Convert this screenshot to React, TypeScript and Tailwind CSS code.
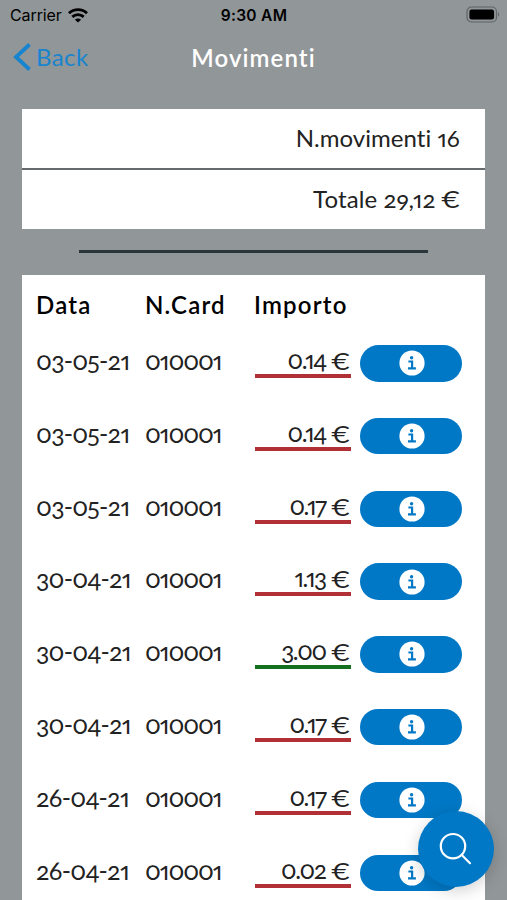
interface Movimento {
    data: string
    card: string
    importo: string
    entrata?: boolean
}

const movimenti: Movimento[] = [
    { data: '03-05-21', card: '010001', importo: '0.14' },
    { data: '03-05-21', card: '010001', importo: '0.14' },
    { data: '03-05-21', card: '010001', importo: '0.17' },
    { data: '30-04-21', card: '010001', importo: '1.13' },
    { data: '30-04-21', card: '010001', importo: '3.00', entrata: true },
    { data: '30-04-21', card: '010001', importo: '0.17' },
    { data: '26-04-21', card: '010001', importo: '0.17' },
    { data: '26-04-21', card: '010001', importo: '0.02' },
]

function StatusBar() {
    return (
        <div className="grid h-[30px] grid-cols-3 items-center pr-[7px] pl-[10px] font-['Inter',sans-serif] text-black">
            <div className="flex items-center gap-[6px]">
                <span className="text-[16px] tracking-[-0.1px]">Carrier</span>
                <svg width="20" height="15" viewBox="0 0 20 15" fill="none" stroke="currentColor" strokeWidth="2.9">
                    <path d="M1 5.3C6 .4 14 .4 19 5.3" />
                    <path d="M4.3 8.9c3.3-3.1 8.1-3.1 11.4 0" />
                    <path d="M10 14.6 6.9 11.7c1.7-1.6 4.5-1.6 6.2 0z" fill="currentColor" stroke="none" />
                </svg>
            </div>
            <span className="pt-px pr-[2px] text-center text-[15.5px] font-semibold tracking-[0.3px] whitespace-nowrap">9:30 AM</span>
            <svg className="-mt-px justify-self-end" width="34" height="17" viewBox="0 0 34 17" fill="none">
                <rect x="1" y="1" width="29.5" height="15" rx="4.5" stroke="#5f6466" strokeWidth="1.2" />
                <rect x="3.4" y="3.4" width="24.7" height="10.2" rx="2.3" fill="#000" />
                <path d="M32 6.3c1.6.6 1.6 3.8 0 4.4z" fill="#5f6466" />
            </svg>
        </div>
    )
}

function Header() {
    return (
        <header className="grid h-[55px] grid-cols-3 items-center px-[13px]">
            <button className="flex items-center gap-[5px] text-[#1784cf]">
                <svg className="-mt-px" width="18" height="28" viewBox="0 0 18 28" fill="none" stroke="currentColor" strokeWidth="3.8">
                    <path d="M16.5 1.5 3 14 16.5 26.5" />
                </svg>
                <span className="-mt-[2px] text-[24px] tracking-[0.4px]">Back</span>
            </button>
            <h1 className="text-center text-[24px] font-semibold tracking-[1.1px] text-white">Movimenti</h1>
        </header>
    )
}

function Riepilogo() {
    return (
        <section className="mx-[22px] mt-[24px] h-[120px] bg-white text-right text-[24px] text-[#222]">
            <p className="flex h-[61px] items-center justify-end border-b-2 border-[#666a6c] pr-[25px] pb-px tracking-[0.05px]">N.movimenti 16</p>
            <p className="flex h-[59px] items-center justify-end gap-[7px] pr-[25px] pb-[2px]">
                <span className="tracking-[0.1px]">Totale 29,12</span>
                <Euro />
            </p>
        </section>
    )
}

// Il simbolo dell'euro resta ad altezza piena accanto alle cifre minuscole
function Euro() {
    return <span className="inline-block origin-right translate-y-px scale-x-115 text-[23.5px] tracking-normal lining-nums">€</span>
}

function InfoIcon() {
    return (
        <svg className="ml-px" width="26" height="26" viewBox="-13 -13 26 26" fill="none">
            <circle r="12.6" fill="#fff" />
            <circle cx="-0.4" cy="-5.2" r="1.7" fill="#0078c5" />
            <path d="M-3.6-1.5H.1V5.3M-4 5.3H3.9" stroke="#0078c5" strokeWidth="2.2" />
        </svg>
    )
}

function Riga({ movimento }: { movimento: Movimento }) {
    return (
        <li className="grid h-[72.8px] grid-cols-[109px_110px_105.3px_102px] items-start text-[25px] leading-[30px] text-[#222]">
            <span className="tracking-[-0.75px]">{movimento.data}</span>
            <span className="tracking-[-1.1px]">{movimento.card}</span>
            <span className={`flex h-[33px] w-[96px] justify-end gap-[7px] border-b-4 pr-px ${movimento.entrata ? 'border-[#13701f]' : 'border-[#b03035]'}`}>
                <span className="text-[24.5px] tracking-[-1.4px]">{movimento.importo}</span>
                <Euro />
            </span>
            <button className="flex h-[36.5px] items-center justify-center rounded-full bg-[#0078c5]">
                <InfoIcon />
            </button>
        </li>
    )
}

function App() {
    return (
        <div className="relative h-[900px] w-full overflow-hidden bg-[#919698] font-['Lato',sans-serif] oldstyle-nums proportional-nums">
            <StatusBar />
            <Header />
            <Riepilogo />
            <div className="mt-[21px] mr-[79px] ml-[79px] h-[3px] bg-[#29343b]" />

            <main className="mx-[22px] mt-[22px] h-[640px] bg-white pl-[14px]">
                <div className="grid h-[70px] grid-cols-[109px_109px_1fr] pt-[12px] text-[24px] leading-[36px] font-semibold tracking-[1.2px] text-black">
                    <span>Data</span>
                    <span>N.Card</span>
                    <span>Importo</span>
                </div>
                <ul>
                    {movimenti.map((movimento, index) => (
                        <Riga key={index} movimento={movimento} />
                    ))}
                </ul>
            </main>

            <button className="absolute top-[811px] left-[418px] flex size-[76px] items-center justify-center rounded-full bg-[#0078c5] text-white shadow-[0_4px_16px_rgba(0,0,0,0.18)]">
                <svg width="34" height="34" viewBox="0 0 34 34" fill="none" stroke="currentColor" strokeWidth="2.2" strokeLinecap="round">
                    <circle cx="14" cy="14.2" r="12.2" />
                    <path d="m23 23.2 8 8" />
                </svg>
            </button>
        </div>
    )
}

export default App
